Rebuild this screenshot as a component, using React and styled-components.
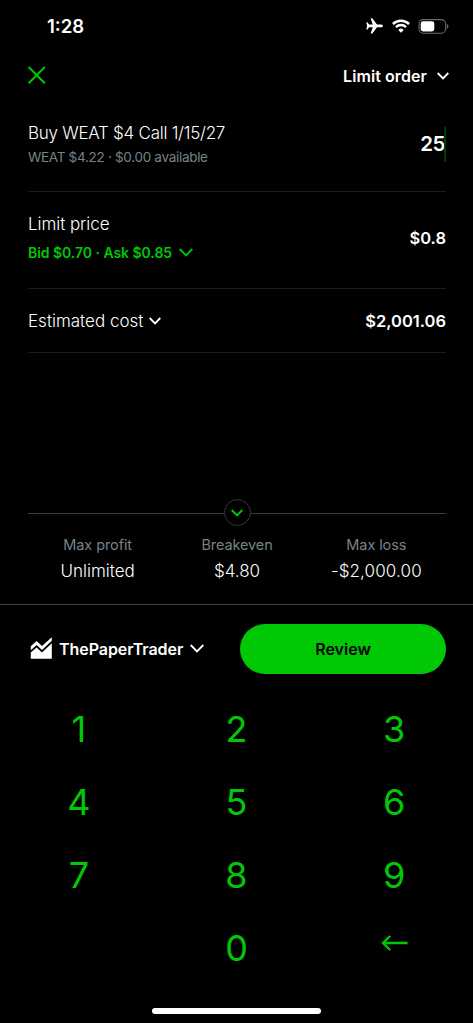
import React from 'react';
import styled, { createGlobalStyle } from 'styled-components';

const GlobalStyle = createGlobalStyle`
    * {
        box-sizing: border-box;
    }
    body {
        margin: 0;
        background: #000;
    }
    button {
        padding: 0;
        border: none;
        background: none;
        font: inherit;
        color: inherit;
    }
`

const Screen = styled.div`
    display: flex;
    flex-direction: column;
    width: 473px;
    height: 1023px;
    overflow: hidden;
    background: #000;
    color: #fff;
    font-family: Inter, "Liberation Sans", sans-serif;
`

const StatusBar = styled.div`
    display: flex;
    align-items: center;
    justify-content: space-between;
    height: 52px;
    padding: 0 24px 0 47px;
`

const StatusIcons = styled.div`
    display: flex;
    align-items: center;
    gap: 8.5px;
`

const Header = styled.div`
    display: flex;
    align-items: center;
    justify-content: space-between;
    height: 48px;
    padding: 0 24px 0 28px;
`

const OrderType = styled.button`
    display: flex;
    align-items: center;
    gap: 10px;
`

const Text = styled.span`
    font-size: ${props => props.$size || 16}px;
    font-weight: ${props => props.$weight || 350};
    letter-spacing: ${props => props.$spacing || 0}px;
    line-height: ${props => props.$line || 24}px;
    color: ${props => props.$color || '#fff'};
    white-space: nowrap;
`

const Form = styled.div`
    padding: 0 27px 0 28px;
`

const Row = styled.div`
    display: flex;
    align-items: center;
    justify-content: space-between;
    height: ${props => props.$height}px;
    padding-bottom: ${props => props.$bottom || 0}px;
    border-bottom: 1px solid #1a1b1c;
`

const Labels = styled.div`
    display: flex;
    flex-direction: column;
    gap: ${props => props.$gap || 0}px;
`

const Inline = styled.div`
    display: flex;
    align-items: center;
    gap: ${props => props.$gap}px;
`

const Quantity = styled.div`
    position: relative;
    display: flex;
    align-items: center;
    height: 35px;
    margin-bottom: 2px;
    padding-right: 1px;
`

const Caret = styled.div`
    position: absolute;
    right: 0;
    top: 0;
    width: 2px;
    height: 35px;
    background: #003c02;
`

const Summary = styled.div`
    display: flex;
    flex-direction: column;
    margin-top: auto;
    padding: 0 27px 0 28px;
    height: 105px;
`

const Divider = styled.div`
    display: flex;
    align-items: center;
    height: 27px;

    &::before,
    &::after {
        content: "";
        flex: 1;
        height: 1px;
        margin-top: 1px;
        background: #3a3d3f;
    }
`

const Collapse = styled.button`
    display: flex;
    align-items: center;
    justify-content: center;
    width: 27px;
    height: 27px;
    border: 1px solid #36393c;
    border-radius: 50%;
`

const Stats = styled.div`
    display: grid;
    grid-template-columns: repeat(3, 1fr);
    padding-top: 7px;
`

const Stat = styled.div`
    display: flex;
    flex-direction: column;
    align-items: center;
    gap: 2px;
`

const Footer = styled.div`
    height: 419px;
    border-top: 1px solid #3b464b;
`

const Actions = styled.div`
    display: flex;
    align-items: center;
    justify-content: space-between;
    height: 87px;
    padding: 0 27px 0 30px;
`

const ReviewButton = styled.button`
    width: 206px;
    height: 50px;
    border-radius: 25px;
    background: #00c805;
    text-align: center;
`

const Keypad = styled.div`
    display: grid;
    grid-template-columns: repeat(3, 1fr);
    grid-auto-rows: 73px;
`

const Key = styled.button`
    display: flex;
    align-items: center;
    justify-content: center;
    font-size: 36px;
    font-weight: 400;
    color: #00c805;
`

const BackKey = styled(Key)`
    padding-bottom: 10px;
`

const HomeArea = styled.div`
    display: flex;
    justify-content: center;
    padding-top: 24px;
`

const HomeBar = styled.div`
    width: 169px;
    height: 6px;
    border-radius: 3px;
    background: #fff;
`

const Chevron = ({ width, height, color = '#fff', stroke = 1.8 }) => (
    <svg width={width} height={height} viewBox={`0 0 ${width} ${height}`} fill="none">
        <path
            d={`M.7 1L${width / 2} ${height - 1.6}L${width - .7} 1`}
            stroke={color}
            strokeWidth={stroke}
        />
    </svg>
)

const PlaneIcon = () => (
    <svg width="17" height="16" viewBox="0 0 17 16" fill="#fff">
        <path d="M17 7.9C17 7.2 16 6.5 14.6 6.5H11L6.5 .6Q6.2 .2 5.7 .2H4.6L6.8 6.5H3.1L1.6 4.5Q1.4 4.3 1.1 4.3H.3L1.1 7.9L.3 11.5H1.1Q1.4 11.5 1.6 11.3L3.1 9.3H6.8L4.6 15.6H5.7Q6.2 15.6 6.5 15.2L11 9.3H14.6C16 9.3 17 8.6 17 7.9Z" />
    </svg>
)

const WifiIcon = () => (
    <svg width="18" height="14" viewBox="0 0 18 14" fill="none" stroke="#fff">
        <path d="M.9 5A11.6 11.6 0 0 1 17.1 5" strokeWidth="2.5" />
        <path d="M3.9 8.1A7.3 7.3 0 0 1 14.1 8.1" strokeWidth="2.3" />
        <path d="M9 13.7L6.3 10.9A3.9 3.9 0 0 1 11.7 10.9Z" fill="#fff" stroke="none" />
    </svg>
)

const BatteryIcon = () => (
    <svg width="31" height="15" viewBox="0 0 31 15" fill="none">
        <rect x="1" y=".6" width="26.6" height="13.6" rx="4.2" stroke="#69696b" strokeWidth="1.1" />
        <rect x="2.7" y="2.3" width="13.6" height="10.2" rx="2.4" fill="#fff" />
        <path d="M28.9 5V9.8C29.9 9.4 30.4 8.5 30.4 7.4C30.4 6.3 29.9 5.4 28.9 5Z" fill="#69696b" />
    </svg>
)

const CloseIcon = () => (
    <svg width="18" height="20" viewBox="0 0 18 20" fill="none">
        <path d="M.6 1L16.8 17.2M16.8 1L.6 17.2" stroke="#00c805" strokeWidth="2" />
    </svg>
)

const ChartIcon = () => (
    <svg width="22" height="24" viewBox="0 0 22 24" fill="#fff">
        <path d="M.8 9.3L6.6 4L12 9L21.8 .2V3.8L12 13L6.6 8L.8 13.2Z" />
        <path d="M.8 15.6L6.6 10.4L12 15.4L21.8 6.2V21.8H.8Z" />
    </svg>
)

const BackIcon = () => (
    <svg width="27" height="16" viewBox="0 0 27 16" fill="none" stroke="#00c805" strokeWidth="2.4">
        <path d="M9.2 1L2 8L9.2 15M2 8H26.6" />
    </svg>
)

const stats = [
    { label: 'Max profit', value: 'Unlimited' },
    { label: 'Breakeven', value: '$4.80' },
    { label: 'Max loss', value: '-$2,000.00', spacing: 0.12 },
];

export default function App() {
    return (
        <Screen>
            <GlobalStyle />
            <StatusBar>
                <Text $size={18.5} $weight={600}>1:28</Text>
                <StatusIcons>
                    <PlaneIcon />
                    <WifiIcon />
                    <BatteryIcon />
                </StatusIcons>
            </StatusBar>
            <Header>
                <CloseIcon />
                <OrderType>
                    <Text $weight={600} $spacing={0.08}>Limit order</Text>
                    <Chevron width={12} height={8} />
                </OrderType>
            </Header>

            <Form>
                <Row $height={92} $bottom={1}>
                    <Labels>
                        <Text $size={17} $spacing={-0.26}>Buy WEAT $4 Call 1/15/27</Text>
                        <Text $size={13.5} $weight={400} $spacing={-0.3} $color="#76838a">WEAT $4.22 · $0.00 available</Text>
                    </Labels>
                    <Quantity>
                        <Text $size={20.5} $weight={600} $spacing={-0.5}>25</Text>
                        <Caret />
                    </Quantity>
                </Row>
                <Row $height={97} $bottom={4}>
                    <Labels $gap={5}>
                        <Text $size={17} $spacing={-0.05}>Limit price</Text>
                        <Inline $gap={7}>
                            <Text $size={14} $weight={600} $color="#00c805" $spacing={-0.04}>Bid $0.70 · Ask $0.85</Text>
                            <Chevron width={14} height={9} color="#00c805" />
                        </Inline>
                    </Labels>
                    <Text $size={16.5} $weight={600}>$0.8</Text>
                </Row>
                <Row $height={64}>
                    <Inline $gap={6}>
                        <Text $size={17}>Estimated cost</Text>
                        <Chevron width={12} height={8} />
                    </Inline>
                    <Text $size={16.5} $weight={600}>$2,001.06</Text>
                </Row>
            </Form>

            <Summary>
                <Divider>
                    <Collapse>
                        <Chevron width={12} height={8} color="#00c805" stroke={2} />
                    </Collapse>
                </Divider>
                <Stats>
                    {stats.map(({ label, value, spacing }) => (
                        <Stat key={label}>
                            <Text $size={14.5} $weight={400} $spacing={-0.1} $color="#76838a">{label}</Text>
                            <Text $size={17} $spacing={spacing}>{value}</Text>
                        </Stat>
                    ))}
                </Stats>
            </Summary>

            <Footer>
                <Actions>
                    <Inline $gap={7}>
                        <ChartIcon />
                        <Text $weight={600} $spacing={-0.05}>ThePaperTrader</Text>
                        <Chevron width={14} height={9} />
                    </Inline>
                    <ReviewButton>
                        <Text $weight={600} $color="#000">Review</Text>
                    </ReviewButton>
                </Actions>
                <Keypad>
                    {[1, 2, 3, 4, 5, 6, 7, 8, 9].map(n => <Key key={n}>{n}</Key>)}
                    <span />
                    <Key>0</Key>
                    <BackKey aria-label="Delete"><BackIcon /></BackKey>
                </Keypad>
                <HomeArea>
                    <HomeBar />
                </HomeArea>
            </Footer>
        </Screen>
    )
}
